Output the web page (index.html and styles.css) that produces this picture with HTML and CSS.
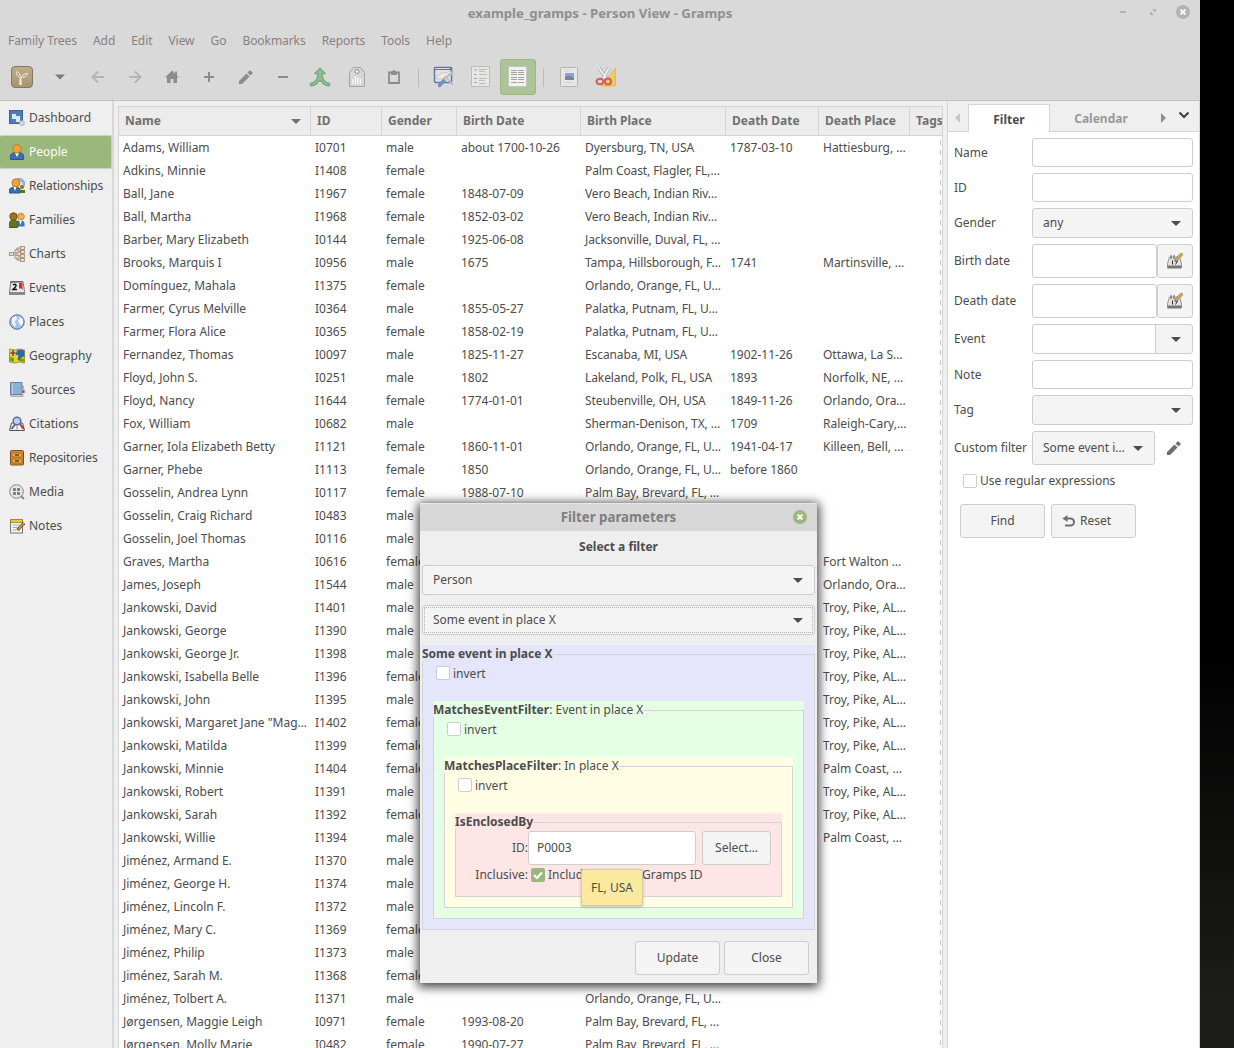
FILE: index.html
```html
<!DOCTYPE html>
<html lang="en">
<head>
<meta charset="utf-8">
<title>example_gramps - Person View - Gramps</title>
<link rel="stylesheet" href="styles.css">
</head>
<body>
<div class="app">
  <header class="chrome">
    <div class="titlebar">
      <h1>example_gramps - Person View - Gramps</h1>
      <div class="winbtns">
        <svg width="14" height="14"><path d="M4 6h6v2H4z" fill="#b3b3b3"/></svg>
        <svg width="14" height="14"><path d="M6 4h4v4zM4 6v4h4z" fill="#b3b3b3"/></svg>
        <svg width="14" height="14"><circle cx="7" cy="7" r="7" fill="#b3b3b3"/><path d="M4.500 4.500l5 5m0-5l-5 5" stroke="#f4f4f4" stroke-width="2"/></svg>
      </div>
    </div>
    <nav class="menubar"><span>Family Trees</span><span>Add</span><span>Edit</span><span>View</span><span>Go</span><span>Bookmarks</span><span>Reports</span><span>Tools</span><span>Help</span></nav>
    <div class="toolbar">
      <span class="tool wide"><svg width="22" height="22"><defs><linearGradient id="gr" x1="0" y1="0" x2="0" y2="1"><stop offset="0" stop-color="#bfae86"/><stop offset="1" stop-color="#a59473"/></linearGradient></defs><rect x=".5" y=".5" width="21" height="21" rx="3.5" fill="url(#gr)" stroke="#82776a"/><path d="M9.500 19v-5.500" stroke="#f3eee0" stroke-width="2.200"/><path d="M9.500 14c0-2-2.500-3.500-3.500-5-1-2 0-3 0-3.500 2 1 3.500 3 3.500 6M10 13c.5-3 2.500-5.500 6.500-5.500-.5 3-3 4-5 4" fill="none" stroke="#f3eee0" stroke-width="1"/></svg></span>
      <span class="tool wide"><svg width="10" height="6"><path d="M0 .5h10L5 5.500z" fill="#7d7876"/></svg></span>
      <span class="tool"><svg width="14" height="14"><path d="M13 7H2M7 1.500L1.500 7 7 12.500" fill="none" stroke="#b4b4b4" stroke-width="1.800"/></svg></span>
      <span class="tool"><svg width="14" height="14"><path d="M1 7h11M7 1.500L12.500 7 7 12.500" fill="none" stroke="#b4b4b4" stroke-width="1.800"/></svg></span>
      <span class="tool"><svg width="14" height="14"><path d="M7 .5L0 7.500h2V13h3.500V9h3v4H12V7.500h2l-2-2v-4h-2v2z" fill="#8c8c8c"/></svg></span>
      <span class="tool"><svg width="12" height="12"><path d="M6 1v10M1 6h10" stroke="#8c8c8c" stroke-width="2"/></svg></span>
      <span class="tool"><svg width="14" height="14"><path d="M0 11v3h3l7.500-7.500-3-3zM8.500 2.500l3 3 1.800-1.800a1 1 0 0 0 0-1.500L11.800.7a1 1 0 0 0-1.500 0z" fill="#8c8c8c"/></svg></span>
      <span class="tool"><svg width="12" height="12"><path d="M1 6h10" stroke="#8c8c8c" stroke-width="2"/></svg></span>
      <span class="tool"><svg width="22" height="20"><path d="M11 .7l5.500 6h-3.200c0 5 2.200 8.500 7.700 9.800l-.8 2.700c-4.500-.7-7.400-2.700-9.200-6.200-1.800 3.500-4.700 5.500-9.200 6.200L1 16.500c5.500-1.300 7.700-4.800 7.700-9.800H5.500z" fill="#8cbd92" stroke="#5f8f67" stroke-width=".8"/></svg></span>
      <span class="tool"><svg width="16" height="20"><path d="M4.500.5h7l4 5V19.500H.5V5.500z" fill="#d6d6d3" stroke="#a3a3a0"/><circle cx="8" cy="4.500" r="2" fill="#f1f1f1" stroke="#8f8f8f"/><path d="M4 17v-5m2.500 5V9.500M9 17v-6.500m2.500 6.500v-5" stroke="#fff" stroke-width="1.200"/></svg></span>
      <span class="tool"><svg width="12" height="16"><path d="M1 3.500h10V14H1z" fill="none" stroke="#8c8c8c" stroke-width="1.800"/><path d="M3 2.500h1.500a1.500 1.500 0 0 1 3 0H9V6H3z" fill="#8c8c8c"/></svg></span>
      <span class="sep"></span>
      <span class="tool"><svg width="22" height="22"><rect x="1.500" y="1.500" width="17" height="15" rx="1" fill="#dfe3e8" stroke="#5f7ca8" stroke-width="1.500"/><path d="M1 1h18v3H1z" fill="#5876a5"/><path d="M2 2.500h15" stroke="#d9e0eb"/><path d="M3 10l4-1 2-3 4 1 4-2 2 3-4 3-3-1-3 3-5 0z" fill="#f3e9da" stroke="#b9b3aa" stroke-width=".6"/><path d="M6.500 19.500l4.500-5" stroke="#6f93c6" stroke-width="3.500" stroke-linecap="round"/><path d="M11 13.500l4-4 5-4M13 11l7 8" stroke="#bcbcbc" stroke-width="1.800"/></svg></span>
      <span class="tool"><svg width="20" height="22"><rect x=".5" y=".5" width="18" height="20" fill="#e6e6e4" stroke="#bdbdbb"/><path d="M3 4h3M3 8.500h3M3 12.500h3M3 16.500h3" stroke="#a8a8a6"/><path d="M8 3.500h8M8 5.500h6M8 8.500h8M8 12.500h8M8 14.500h6M8 17.500h7" stroke="#bdbdbb"/></svg></span>
      <span class="tool active"><svg width="20" height="22"><rect x=".5" y=".5" width="18" height="20" fill="#f1f1ef" stroke="#c3c6be"/><path d="M3 4.500h6M3 6.500h6M3 8.500h6M3 11.500h6M3 13.500h6M3 16.500h6M10 4.500h6M10 6.500h6M10 8.500h6M10 11.500h6M10 13.500h6M10 16.500h6" stroke="#a4a4a2"/></svg></span>
      <span class="sep"></span>
      <span class="tool"><svg width="18" height="20"><rect x=".5" y=".5" width="17" height="19" rx="1" fill="#e6e6e4" stroke="#b5b5b3"/><path d="M5 6h9v7H5z" fill="#86a5cf"/><path d="M5 10l4-1.500 5 2.500v2H5z" fill="#74869a"/><path d="M4 15.500h9M4 4h6" stroke="#d3d3d1"/></svg></span>
      <span class="tool"><svg width="22" height="22"><path d="M20.500 2v18H6z" fill="#ead062" stroke="#dcc04f"/><path d="M4 2l8 11M14 2L8 13" stroke="#aaa" stroke-width="3.200"/><path d="M4 2l8 11M14 2L8 13" stroke="#f0f0f0" stroke-width="1.800"/><ellipse cx="5" cy="15.500" rx="3.500" ry="2.800" fill="none" stroke="#d95959" stroke-width="2"/><ellipse cx="13" cy="15.500" rx="3" ry="3" fill="none" stroke="#d95959" stroke-width="2"/></svg></span>
    </div>
  </header>

  <main class="body">
    <nav class="side">
      <a><svg width="16" height="16"><rect x=".5" y=".5" width="13" height="13" fill="#4f7db8" stroke="#3b6399"/><path d="M3 4h4v2h4v6H7V9H3z" fill="#dfe8f3"/><circle cx="13" cy="13" r="2.300" fill="#dde3ea" stroke="#9aa9bb"/></svg>Dashboard</a>
      <a class="on"><svg width="16" height="16"><path d="M1.500 15.500c-1-6 2-7 6.500-7s7.500 1 6.500 7z" fill="#3b6cb0" stroke="#2b5291"/><path d="M6 9h4l-2 4z" fill="#fff"/><circle cx="8" cy="4.800" r="4.200" fill="#efa23a" stroke="#c17b1d"/></svg>People</a>
      <a class="tight"><svg width="16" height="16"><path d="M8 2c4-2 8 2 7 6" fill="none" stroke="#8db0de" stroke-width="3"/><path d="M.5 15c-1-5 2-6 5.500-6s6 1 5.500 6z" fill="#3b6cb0" stroke="#2b5291"/><path d="M4.500 9h3l-1.500 4z" fill="#fff"/><circle cx="7" cy="4.800" r="4" fill="#efa23a" stroke="#c17b1d"/><circle cx="13" cy="9" r="2" fill="#9a6a20"/><path d="M10 15v-3h6v3z" fill="#55761f"/></svg>Relationships</a>
      <a><svg width="16" height="16"><path d="M8 14.500V8.500h4c3 0 4 2 3.500 6z" fill="#3f74bd"/><path d="M10 8h3l-1.500 5z" fill="#fff"/><circle cx="12" cy="4.500" r="3.300" fill="#f2b04e" stroke="#c98a2a"/><path d="M.5 15.500c-1-6 1-7.500 4-7.500s5 1.500 4 7.500z" fill="#5d7723" stroke="#455b15"/><circle cx="4.500" cy="4.500" r="3.700" fill="#a5701e" stroke="#76500f"/></svg>Families</a>
      <a><svg width="16" height="16"><path d="M4 8h3m5-6H8v12h4M8 5.500h4M8 10h4" fill="none" stroke="#9b8878"/><g fill="#efd8bf" stroke="#9b8878" stroke-width=".8"><rect x=".5" y="6.500" width="4" height="3"/><rect x="6" y="3.800" width="4" height="3"/><rect x="6" y="9.300" width="4" height="3"/><rect x="11.500" y=".5" width="4" height="3"/><rect x="11.500" y="4.500" width="4" height="3"/><rect x="11.500" y="8.500" width="4" height="3"/><rect x="11.500" y="12.500" width="4" height="3"/></g></svg>Charts</a>
      <a><svg width="16" height="16"><path d="M2 1.500h12l1.500 10v3H.5v-3z" fill="#e9e9e9" stroke="#777"/><path d="M.5 12h15v3H.5z" fill="#888"/><path d="M2.500 2h11M1 2h3" stroke="#555"/><path d="M4 5c3-2 4 .5 2 2.500L4 9.500h4" fill="none" stroke="#111" stroke-width="1.500"/><path d="M10 3h3.500v7l-2-2-1.500 1z" fill="#d42a2a"/></svg>Events</a>
      <a><svg width="16" height="16"><circle cx="8" cy="8" r="7.200" fill="#a9c4e6" stroke="#47699b"/><path d="M3 4l4-2 1 3-3 3 2 2-1 3-3-4zM10 2.500l4 2.500v4l-2 3-2-3-1-3 2-1z" fill="#f4f7fb"/></svg>Places</a>
      <a><svg width="16" height="16"><path d="M.5 1l5 1 5-1 5 1v13l-5-1-5 1-5-1z" fill="#e3d52e" stroke="#a89a2a"/><path d="M8 2.500l3-1 4.500 1v6l-3 1-1 4-3-2 1-4-3-1z" fill="#2f6aa8"/><path d="M1 9l4 1v4l-4-1zM11 10l4 1v3l-4-1z" fill="#6da02d"/><path d="M4 2v6M1.500 5h5" stroke="#7a3a70" stroke-width="1.500"/></svg>Geography</a>
      <a class="wide-ic"><svg width="16" height="16"><path d="M13 3h1.500l1.500 6-1.500 5H13z" fill="#ddd"/><path d="M14 4v3" stroke="#e5b12e" stroke-width="2"/><path d="M14.500 8v3" stroke="#d33" stroke-width="2"/><path d="M1.500.5H13v12H1.500z" fill="#8fb0d6" stroke="#6080aa"/><path d="M1 13h13v1.500H2z" fill="#e8e8e8" stroke="#888" stroke-width=".6"/><path d="M3.500 1v11" stroke="#b7cde6"/></svg>Sources</a>
      <a><svg width="16" height="16"><path d="M2.500 7h11l2 7.500H.5z" fill="#f3f3f3" stroke="#555"/><path d="M11 8l3.500 5" stroke="#c33" stroke-width="2"/><path d="M8 8v6" stroke="#999"/><circle cx="8" cy="5" r="3.800" fill="#b9d3ef" stroke="#55709a" stroke-width="1.500"/><path d="M6 8.500L2.500 13" stroke="#4d5f7a" stroke-width="1.800"/></svg>Citations</a>
      <a class="tight"><svg width="16" height="16"><rect x="1.500" y=".5" width="13" height="14.500" rx="1" fill="#d98d2c" stroke="#80501a"/><path d="M3 3h10v4H3zM3 9h10v4H3z" fill="#eaa94c" stroke="#9a6220" stroke-width=".8"/><path d="M6 5h4M6 11h4" stroke="#6b420f" stroke-width="1.500"/></svg>Repositories</a>
      <a><svg width="16" height="16"><circle cx="7.500" cy="7.500" r="6.800" fill="#e6e6e4" stroke="#858583"/><path d="M12 12l3 3" stroke="#858583" stroke-width="1.800"/><path d="M4.500 4.500h2v2h-2zM8.500 4.500h2v2h-2zM4.500 8.500h2v2h-2zM8.500 8.500h2v2h-2z" fill="#777" stroke="#666" stroke-width=".7"/></svg>Media</a>
      <a><svg width="16" height="16"><rect x="1.500" y="2" width="12" height="13" fill="#f7f6ee" stroke="#777"/><path d="M1.500 1.500h12v3h-12z" fill="#e9c53c" stroke="#8a7420" stroke-width=".7"/><path d="M3.500 7h7M3.500 9.500h5M3.500 12h4" stroke="#aaa"/><path d="M15 5L8.500 12" stroke="#5d4520" stroke-width="3"/><path d="M15 5L9 11.500" stroke="#d8a048" stroke-width="1.500"/></svg>Notes</a>
    </nav>

    <section class="tree">
      <table>
        <colgroup><col class="c1"><col class="c2"><col class="c3"><col class="c4"><col class="c5"><col class="c6"><col class="c7"><col class="c8"></colgroup>
        <thead><tr><th><span class="sort">Name<i class="tri"></i></span></th><th>ID</th><th>Gender</th><th>Birth Date</th><th>Birth Place</th><th>Death Date</th><th>Death Place</th><th>Tags</th></tr></thead>
        <tbody>
          <tr><td>Adams, William<td>I0701<td>male<td>about 1700-10-26<td>Dyersburg, TN, USA<td>1787-03-10<td>Hattiesburg, …<td></tr>
          <tr><td>Adkins, Minnie<td>I1408<td>female<td><td>Palm Coast, Flagler, FL,…<td><td><td></tr>
          <tr><td>Ball, Jane<td>I1967<td>female<td>1848-07-09<td>Vero Beach, Indian Riv…<td><td><td></tr>
          <tr><td>Ball, Martha<td>I1968<td>female<td>1852-03-02<td>Vero Beach, Indian Riv…<td><td><td></tr>
          <tr><td>Barber, Mary Elizabeth<td>I0144<td>female<td>1925-06-08<td>Jacksonville, Duval, FL, …<td><td><td></tr>
          <tr><td>Brooks, Marquis I<td>I0956<td>male<td>1675<td>Tampa, Hillsborough, F…<td>1741<td>Martinsville, …<td></tr>
          <tr><td>Domínguez, Mahala<td>I1375<td>female<td><td>Orlando, Orange, FL, U…<td><td><td></tr>
          <tr><td>Farmer, Cyrus Melville<td>I0364<td>male<td>1855-05-27<td>Palatka, Putnam, FL, U…<td><td><td></tr>
          <tr><td>Farmer, Flora Alice<td>I0365<td>female<td>1858-02-19<td>Palatka, Putnam, FL, U…<td><td><td></tr>
          <tr><td>Fernandez, Thomas<td>I0097<td>male<td>1825-11-27<td>Escanaba, MI, USA<td>1902-11-26<td>Ottawa, La S…<td></tr>
          <tr><td>Floyd, John S.<td>I0251<td>male<td>1802<td>Lakeland, Polk, FL, USA<td>1893<td>Norfolk, NE, …<td></tr>
          <tr><td>Floyd, Nancy<td>I1644<td>female<td>1774-01-01<td>Steubenville, OH, USA<td>1849-11-26<td>Orlando, Ora…<td></tr>
          <tr><td>Fox, William<td>I0682<td>male<td><td>Sherman-Denison, TX, …<td>1709<td>Raleigh-Cary,…<td></tr>
          <tr><td>Garner, Iola Elizabeth Betty<td>I1121<td>female<td>1860-11-01<td>Orlando, Orange, FL, U…<td>1941-04-17<td>Killeen, Bell, …<td></tr>
          <tr><td>Garner, Phebe<td>I1113<td>female<td>1850<td>Orlando, Orange, FL, U…<td>before 1860<td><td></tr>
          <tr><td>Gosselin, Andrea Lynn<td>I0117<td>female<td>1988-07-10<td>Palm Bay, Brevard, FL, …<td><td><td></tr>
          <tr><td>Gosselin, Craig Richard<td>I0483<td>male<td><td><td><td><td></tr>
          <tr><td>Gosselin, Joel Thomas<td>I0116<td>male<td><td><td><td><td></tr>
          <tr><td>Graves, Martha<td>I0616<td>female<td><td><td><td>Fort Walton …<td></tr>
          <tr><td>James, Joseph<td>I1544<td>male<td><td><td><td>Orlando, Ora…<td></tr>
          <tr><td>Jankowski, David<td>I1401<td>male<td><td><td><td>Troy, Pike, AL…<td></tr>
          <tr><td>Jankowski, George<td>I1390<td>male<td><td><td><td>Troy, Pike, AL…<td></tr>
          <tr><td>Jankowski, George Jr.<td>I1398<td>male<td><td><td><td>Troy, Pike, AL…<td></tr>
          <tr><td>Jankowski, Isabella Belle<td>I1396<td>female<td><td><td><td>Troy, Pike, AL…<td></tr>
          <tr><td>Jankowski, John<td>I1395<td>male<td><td><td><td>Troy, Pike, AL…<td></tr>
          <tr><td>Jankowski, Margaret Jane "Mag…<td>I1402<td>female<td><td><td><td>Troy, Pike, AL…<td></tr>
          <tr><td>Jankowski, Matilda<td>I1399<td>female<td><td><td><td>Troy, Pike, AL…<td></tr>
          <tr><td>Jankowski, Minnie<td>I1404<td>female<td><td><td><td>Palm Coast, …<td></tr>
          <tr><td>Jankowski, Robert<td>I1391<td>male<td><td><td><td>Troy, Pike, AL…<td></tr>
          <tr><td>Jankowski, Sarah<td>I1392<td>female<td><td><td><td>Troy, Pike, AL…<td></tr>
          <tr><td>Jankowski, Willie<td>I1394<td>male<td><td><td><td>Palm Coast, …<td></tr>
          <tr><td>Jiménez, Armand E.<td>I1370<td>male<td><td><td><td><td></tr>
          <tr><td>Jiménez, George H.<td>I1374<td>male<td><td><td><td><td></tr>
          <tr><td>Jiménez, Lincoln F.<td>I1372<td>male<td><td><td><td><td></tr>
          <tr><td>Jiménez, Mary C.<td>I1369<td>female<td><td><td><td><td></tr>
          <tr><td>Jiménez, Philip<td>I1373<td>male<td><td><td><td><td></tr>
          <tr><td>Jiménez, Sarah M.<td>I1368<td>female<td><td><td><td><td></tr>
          <tr><td>Jiménez, Tolbert A.<td>I1371<td>male<td><td>Orlando, Orange, FL, U…<td><td><td></tr>
          <tr><td>Jørgensen, Maggie Leigh<td>I0971<td>female<td>1993-08-20<td>Palm Bay, Brevard, FL, …<td><td><td></tr>
          <tr><td>Jørgensen, Molly Marie<td>I0482<td>female<td>1990-07-27<td>Palm Bay, Brevard, FL, …<td><td><td></tr>
        </tbody>
      </table>
    </section>

    <aside class="panel">
      <div class="tabs">
        <span class="arr"><svg width="5" height="10"><path d="M5 0v10L0 5z" fill="#c6c6c6"/></svg></span>
        <span class="tab cur">Filter</span>
        <span class="tab">Calendar</span>
        <span class="arr right"><svg width="5" height="10"><path d="M0 0v10l5-5z" fill="#8e8e8e"/></svg></span>
        <span class="chev"><svg width="12" height="8"><path d="M1.500 1.500L6 6l4.500-4.500" fill="none" stroke="#3f3f3f" stroke-width="2"/></svg></span>
      </div>
      <div class="form">
        <div class="field"><label>Name</label><span class="entry"></span></div>
        <div class="field"><label>ID</label><span class="entry"></span></div>
        <div class="field"><label>Gender</label><span class="combo">any<i class="tri"></i></span></div>
        <div class="field"><label>Birth date</label><span class="entry tall"></span><span class="btn cal"><svg width="16" height="16"><path d="M2.500 4h10l2 7v3.500H.5V11z" fill="#e2e2e0" stroke="#9a9a98"/><path d="M.5 12.500h14v3H.5z" fill="#777"/><path d="M4 2v4M7 2v4" stroke="#666"/><path d="M5.500 7.500v4M7.500 8h3l-2 3.500" stroke="#333" fill="none"/><path d="M15.500.5L8.500 7.500" stroke="#8a6a3a" stroke-width="3"/><path d="M15.500.5L9 7" stroke="#e0a95a" stroke-width="1.800"/></svg></span></div>
        <div class="field"><label>Death date</label><span class="entry tall"></span><span class="btn cal"><svg width="16" height="16"><path d="M2.500 4h10l2 7v3.500H.5V11z" fill="#e2e2e0" stroke="#9a9a98"/><path d="M.5 12.500h14v3H.5z" fill="#777"/><path d="M4 2v4M7 2v4" stroke="#666"/><path d="M5.500 7.500v4M7.500 8h3l-2 3.500" stroke="#333" fill="none"/><path d="M15.500.5L8.500 7.500" stroke="#8a6a3a" stroke-width="3"/><path d="M15.500.5L9 7" stroke="#e0a95a" stroke-width="1.800"/></svg></span></div>
        <div class="field"><label>Event</label><span class="entry mid joined"></span><span class="drop"><i class="tri"></i></span></div>
        <div class="field"><label>Note</label><span class="entry"></span></div>
        <div class="field"><label>Tag</label><span class="combo"><i class="tri"></i></span></div>
        <div class="field"><label>Custom filter</label><span class="combo short">Some event i…<i class="tri"></i></span><svg class="pen" width="14" height="14"><path d="M0 11v3h3l7.500-7.500-3-3zM8.500 2.500l3 3 1.800-1.800a1 1 0 0 0 0-1.500L11.800.7a1 1 0 0 0-1.500 0z" fill="#6e6e6e"/></svg></div>
        <div class="regex"><i class="check"></i>Use regular expressions</div>
        <div class="actions"><span class="btn">Find</span><span class="btn reset"><svg width="14" height="12"><path d="M4 3.500h4.500a3.500 3.500 0 0 1 0 7H3" fill="none" stroke="#6e6e6e" stroke-width="2"/><path d="M5.500 0v7L.5 3.500z" fill="#6e6e6e"/></svg>Reset</span></div>
      </div>
    </aside>
  </main>
</div>

<div class="dialog">
  <div class="dlg-title"><h2>Filter parameters</h2><svg width="14" height="14"><circle cx="7" cy="7" r="7" fill="#9ab87c"/><path d="M4.500 4.500l5 5m0-5l-5 5" stroke="#fff" stroke-width="1.800"/></svg></div>
  <div class="dlg-body">
    <h3>Select a filter</h3>
    <div class="combo">Person<i class="tri"></i></div>
    <div class="combo focus">Some event in place X<i class="tri"></i></div>
    <div class="frame blue">
      <div class="legend"><b>Some event in place X</b></div>
      <div class="inv"><i class="check"></i>invert</div>
      <div class="frame green">
        <div class="legend"><b>MatchesEventFilter</b>: Event in place X</div>
        <div class="inv"><i class="check"></i>invert</div>
        <div class="frame yellow">
          <div class="legend"><b>MatchesPlaceFilter</b>: In place X</div>
          <div class="inv"><i class="check"></i>invert</div>
          <div class="frame pink">
            <div class="legend"><b>IsEnclosedBy</b></div>
            <div class="idrow"><label>ID:</label><span class="entry tall">P0003</span><span class="btn">Select…</span></div>
            <div class="incl"><label>Inclusive:</label><i class="check done"><svg width="14" height="14"><path d="M3 7l3 3 5-5.500" fill="none" stroke="#fff" stroke-width="2.200"/></svg></i><span class="incl-a">Includ</span><span>Gramps ID</span></div>
            <div class="tip">FL, USA</div>
          </div>
        </div>
      </div>
    </div>
    <div class="dlg-actions"><span class="btn">Update</span><span class="btn">Close</span></div>
  </div>
</div>
</body>
</html>
```
FILE: styles.css
```css
* { box-sizing: border-box; }
body {
  margin: 0; width: 1234px; height: 1048px; overflow: hidden; position: relative;
  background: linear-gradient(#000 0, #000 650px, #1c1c1b 1000px);
  font: 12px/16px "Noto Sans", sans-serif; color: #4c4c4c;
}
h1, h2, h3 { margin: 0; font-size: 12px; }
svg { display: block; flex: none; }
.app { width: 1200px; height: 1048px; display: flex; flex-direction: column; background: #efefef; }

.chrome { height: 101px; flex: none; background: #d9d9d9; border-bottom: 1px solid #c4c4c4; color: #8a8080; }
.titlebar { height: 26px; display: flex; align-items: center; justify-content: center; position: relative; }
.titlebar h1 { font-size: 13.2px; color: #8f8f8f; }
.winbtns { position: absolute; right: 10px; top: 5px; display: flex; gap: 16px; }
.menubar { height: 28px; display: flex; align-items: center; gap: 16px; padding: 1px 0 0 8px; letter-spacing: -.06px; }
.toolbar { height: 46px; display: flex; align-items: center; padding-left: 3px; }
.tool { width: 37px; height: 36px; display: flex; align-items: center; justify-content: center; }
.tool.wide { width: 38px; }
.tool.active { width: 36px; margin: 0 1px 0 1px; border-radius: 3px; background: #adc498; border: 1px solid #9eb786; }
.sep { width: 13px; height: 19px; display: flex; justify-content: center; }
.sep::before { content: ""; width: 1px; background: #bcbcbc; }

.body { flex: 1; display: flex; min-height: 0; }
.side { width: 114px; flex: none; border-right: 2px solid #d8d8d8; }
.side a { display: flex; align-items: center; gap: 4px; height: 34px; width: 112px; padding-left: 9px; white-space: nowrap; }
.side a.wide-ic { gap: 6px; }
.side a.tight { letter-spacing: -.1px; }
.side a.on { background: #9ab87c; color: #fff; border: 1px solid #c6d4b8; border-left-width: 0; border-radius: 2px; }

.tree { width: 825px; margin: 5px 0 0 4px; flex: none; overflow: hidden; background: #fff; border: 1px solid #d4d4d4; border-bottom: 0; position: relative; }
.tree::after { content: ""; position: absolute; right: 1px; top: 33px; bottom: 0; width: 1px; background: repeating-linear-gradient(#c6c6c6 0 5px, #fff 5px 10px); }
table { width: 823px; table-layout: fixed; border-collapse: separate; border-spacing: 0; }
.c1 { width: 192px; } .c2 { width: 71px; } .c3 { width: 75px; } .c4 { width: 124px; }
.c5 { width: 145px; } .c6 { width: 93px; } .c7 { width: 91px; } .c8 { width: 32px; }
th, td { text-align: left; white-space: nowrap; overflow: hidden; padding: 0 0 0 4px; line-height: 22px; height: 23px; }
td:nth-child(5) { letter-spacing: -.1px; }
th { height: 29px; padding-left: 6px; color: #707070; background: #ececec; border: solid #d4d4d4; border-width: 0 1px 1px 0; }
th:last-child { border-right: 0; }
.sort { display: flex; align-items: center; justify-content: space-between; padding-right: 9px; }
.tri { width: 0; height: 0; border: 5px solid transparent; border-top-color: currentColor; border-bottom: 0; flex: none; }

.panel { width: 253px; margin-left: 4px; background: #fff; border: solid #d4d4d4; border-width: 0 1px; flex: none; }
.tabs { height: 31px; display: flex; background: #efefef; border-bottom: 1px solid #d4d4d4; position: relative; }
.arr { width: 20px; padding: 12px 0 0 7px; }
.tab { margin-top: 3px; height: 28px; line-height: 29px; width: 102px; text-align: center; font-weight: bold; color: #999; }
.tab.cur { width: 82px; background: #fff; color: #4c4c4c; border: 1px solid #d4d4d4; border-bottom: 0; }
.arr.right { padding-left: 9px; width: 26px; }
.chev { padding-top: 10px; }
.form { padding: 6px 6px 0 6px; display: flex; flex-direction: column; gap: 6px; }
.field { display: flex; align-items: center; }
.field label { width: 78px; flex: none; }
.entry, .combo, .btn, .drop { border: 1px solid #cdcdcd; border-radius: 3px; height: 29px; display: flex; align-items: center; }
.entry { flex: 1; background: #fff; }
.combo { flex: 1; height: 30px; background: #f4f4f4; padding: 0 11px 0 10px; justify-content: space-between; }
.combo .tri { margin-left: auto; }
.tall, .btn { height: 34px; }
.mid { height: 30px; }
.joined { border-radius: 3px 0 0 3px; }
.drop { width: 38px; height: 30px; margin-left: -1px; border-radius: 0 3px 3px 0; background: #f4f4f4; justify-content: center; padding-left: 3px; }
.btn { background: #f4f4f4; justify-content: center; }
.cal { width: 36px; }
.combo.short { flex: none; width: 123px; height: 34px; }
.pen { margin-left: 12px; }
.regex { height: 20px; margin-bottom: 1px; padding-left: 9px; display: flex; align-items: center; gap: 3px; }
.check { width: 14px; height: 14px; flex: none; border: 1px solid #cdcdcd; border-radius: 2px; background: #fff; }
.check.done { border: 0; background: #9ab87c; }
.actions { display: flex; gap: 6px; padding: 6px 0 0 6px; }
.actions .btn { width: 85px; }
.reset { gap: 4px; padding-right: 14px; }

.dialog { position: absolute; left: 420px; top: 503px; width: 397px; height: 480px; background: #efefef; box-shadow: 0 2px 10px 2px rgba(0,0,0,.75); display: flex; flex-direction: column; }
.dlg-title { height: 28px; border-top: 1px solid #e8e8e8; background: #d7d7d7; display: flex; align-items: center; padding: 0 10px 1px 24px; }
.dlg-title h2 { flex: 1; text-align: center; font-size: 13.3px; color: #7f7f7f; }
.dlg-body { padding: 8px 2px 0; display: flex; flex-direction: column; }
h3 { text-align: center; margin-bottom: 10px; }
.dlg-body > .combo { flex: none; margin-bottom: 10px; }
.focus { position: relative; }
.focus::after { content: ""; position: absolute; inset: 1px; border: 1px dotted #b4b4b4; }
.frame { position: relative; padding: 0 11px 11px; }
.frame::before { content: ""; position: absolute; inset: 9px 0 0; border: 1px solid #d4d4d4; }
.legend { position: relative; width: max-content; height: 16px; line-height: 17px; margin-left: -11px; background: inherit; }
.blue, .blue > .legend { background: #e5e5fc; }
.green, .green > .legend { background: #e5ffe5; }
.yellow, .yellow > .legend { background: #fffee5; }
.pink, .pink > .legend { background: #fee6e6; }
.inv { position: relative; height: 40px; padding: 5px 0 0 3px; display: flex; align-items: flex-start; gap: 3px; line-height: 15px; }
.pink { height: 84px; }
.idrow { position: relative; display: flex; align-items: center; margin-top: 2px; }
.idrow label, .incl label { width: 62px; text-align: right; }
.idrow .entry { flex: none; width: 168px; padding-left: 8px; }
.idrow .btn { width: 69px; margin-left: 6px; }
.incl { position: relative; display: flex; align-items: center; height: 20px; gap: 3px; white-space: nowrap; line-height: 18px; }
.incl-a { width: 91px; }
.tip { position: absolute; left: 126px; top: 56px; width: 62px; height: 37px; line-height: 36px; text-align: center; background: #fce9a0; border: 1px solid #d3c9a4; border-radius: 2px; box-shadow: 0 1px 3px rgba(0,0,0,.25); }
.dlg-actions { display: flex; justify-content: flex-end; gap: 4px; padding: 11px 6px 0 0; }
.dlg-actions .btn { width: 85px; }
```
